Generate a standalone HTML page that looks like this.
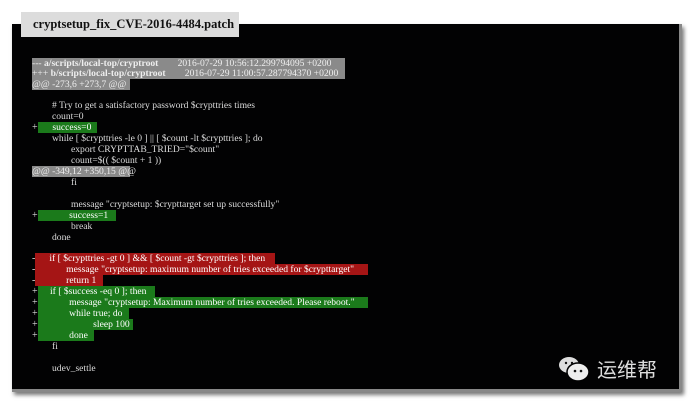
<!DOCTYPE html><html><head><style>
body{margin:0;width:690px;height:405px;background:#fff;position:relative;overflow:hidden;font-family:"Liberation Serif",serif;}
.box{position:absolute;left:12px;top:24px;width:667px;height:365px;background:#020203;box-shadow:2px 3px 4px #777;border-right:3px solid #888;border-bottom:3px solid #888}
.tab{position:absolute;left:21px;top:12px;width:218px;height:25px;background:#dcdcdc;font-weight:bold;font-size:12.5px;line-height:25px;padding-left:12px;box-sizing:border-box;color:#111;white-space:nowrap}
.l{position:absolute;font-size:9.6px;line-height:11px;height:11px;color:#ddd;white-space:pre}
.g{background:#1b7a1b;color:#fff}.r{background:#a51515;color:#fff}.h{background:#8a8a8a;color:#eee}
.m{position:absolute;left:32px;font-size:10px;line-height:11px;color:#ddd}
</style></head><body>
<div class="box"></div>
<div class="tab">cryptsetup_fix_CVE-2016-4484.patch</div>
<div class="l h" style="left:32px;top:58px;width:313px">--- <b>a/scripts/local-top/cryptroot</b>        2016-07-29 10:56:12.299794095 +0200</div>
<div class="l h" style="left:32px;top:68px;width:313px">+++ <b>b/scripts/local-top/cryptroot</b>        2016-07-29 11:00:57.287794370 +0200</div>
<div class="l h" style="left:32px;top:79px;width:98px">@@ -273,6 +273,7 @@</div>
<div class="l" style="left:52px;top:100px"># Try to get a satisfactory password $crypttries times</div>
<div class="l" style="left:52px;top:111px">count=0</div>
<div class="m" style="top:122px">+</div><div class="l g" style="left:38px;top:122px;width:59px">      success=0</div>
<div class="l" style="left:52px;top:133px">while [ $crypttries -le 0 ] || [ $count -lt $crypttries ]; do</div>
<div class="l" style="left:71px;top:144px">export CRYPTTAB_TRIED="$count"</div>
<div class="l" style="left:71px;top:155px">count=$(( $count + 1 ))</div>
<div class="l h" style="left:32px;top:166px;width:98px">@@ -349,12 +350,15 @@</div>
<div class="l" style="left:71px;top:177px">fi</div>
<div class="l" style="left:71px;top:199px">message "cryptsetup: $crypttarget set up successfully"</div>
<div class="m" style="top:210px">+</div><div class="l g" style="left:38px;top:210px;width:78px">             success=1</div>
<div class="l" style="left:71px;top:221px">break</div>
<div class="l" style="left:52px;top:232px">done</div>
<div class="m" style="top:253px">-</div><div class="l r" style="left:35px;top:253px;width:240px">      if [ $crypttries -gt 0 ] &amp;&amp; [ $count -gt $crypttries ]; then</div>
<div class="m" style="top:264px">-</div><div class="l r" style="left:35px;top:264px;width:333px">             message "cryptsetup: maximum number of tries exceeded for $crypttarget"</div>
<div class="m" style="top:275px">-</div><div class="l r" style="left:35px;top:275px;width:68px">             return 1</div>
<div class="m" style="top:286px">+</div><div class="l g" style="left:38px;top:286px;width:117px">     if [ $success -eq 0 ]; then</div>
<div class="m" style="top:297px">+</div><div class="l g" style="left:38px;top:297px;width:330px">             message "cryptsetup: Maximum number of tries exceeded. Please reboot."</div>
<div class="m" style="top:308px">+</div><div class="l g" style="left:38px;top:308px;width:91px">             while true; do</div>
<div class="m" style="top:319px">+</div><div class="l g" style="left:38px;top:319px;width:95px">                       sleep 100</div>
<div class="m" style="top:330px">+</div><div class="l g" style="left:38px;top:330px;width:56px">             done</div>
<div class="l" style="left:52px;top:341px">fi</div>
<div class="l" style="left:52px;top:363px">udev_settle</div>
<svg style="position:absolute;left:556px;top:354px" width="40" height="30"><ellipse cx="13" cy="11" rx="10" ry="8" fill="#ddd"/><ellipse cx="22" cy="18" rx="11" ry="9" fill="#eee" stroke="#020203" stroke-width="1.5"/><circle cx="19" cy="17" r="1.3" fill="#111"/><circle cx="25" cy="17" r="1.3" fill="#111"/><circle cx="10" cy="9" r="1.2" fill="#111"/><circle cx="16" cy="9" r="1.2" fill="#111"/></svg>
<div style="position:absolute;left:597px;top:356px;font-family:'Noto Sans CJK SC',sans-serif;font-size:20px;color:#ddd;line-height:26px">运维帮</div>
</body></html>
